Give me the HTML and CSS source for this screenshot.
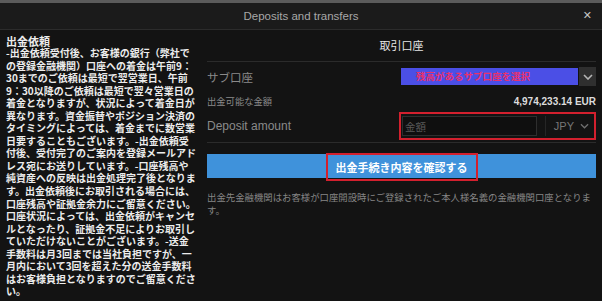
FILE: index.html
```html
<!DOCTYPE html>
<html lang="ja">
<head>
  <meta charset="UTF-8" />
  <meta name="viewport" content="width=device-width, initial-scale=1.0"/>
  <title>Deposits and transfers</title>
  <link rel="stylesheet" href="styles.css">
</head>
<body>

  <div class="topstrip"></div>
  <div class="titlebar">
    <span class="title">Deposits and transfers</span>
    <span class="close">&#x2715;</span>
  </div>

  <div class="content">
    <div class="notice">
      <h3>出金依頼</h3>
      <p>
        -出金依頼受付後、お客様の銀行（弊社で<br>
        の登録金融機関）口座への着金は午前9：<br>
        30までのご依頼は最短で翌営業日、午前<br>
        9：30以降のご依頼は最短で翌々営業日の<br>
        着金となりますが、状況によって着金日が<br>
        異なります。資金振替やポジション決済の<br>
        タイミングによっては、着金までに数営業<br>
        日要することもございます。-出金依頼受<br>
        付後、受付完了のご案内を登録メールアド<br>
        レス宛にお送りしています。-口座残高や<br>
        純資産への反映は出金処理完了後となりま<br>
        す。出金依頼後にお取引される場合には、<br>
        口座残高や証拠金余力にご留意ください。<br>
        口座状況によっては、出金依頼がキャンセ<br>
        ルとなったり、証拠金不足によりお取引し<br>
        ていただけないことがございます。-送金<br>
        手数料は月3回までは当社負担ですが、一<br>
        月内において3回を超えた分の送金手数料<br>
        はお客様負担となりますのでご留意くださ<br>
        い。
      </p>
    </div>

    <div class="form">
      <div class="form-title">取引口座</div>

      <div class="row row-sub">
        <span class="label">サブ口座</span>
        <div class="select-wrap">
          <div class="select-sub">残高があるサブ口座を選択</div>
          <div class="select-arrow">
            <svg width="10" height="6" viewBox="0 0 10 6"><polyline points="1,1 5,5 9,1" fill="none" stroke="#b5b5b5" stroke-width="1.6"/></svg>
          </div>
        </div>
      </div>

      <div class="row row-available">
        <span class="label small">出金可能な金額</span>
        <span class="amount">4,974,233.14 EUR</span>
      </div>

      <div class="row row-deposit">
        <span class="label en">Deposit amount</span>
        <div class="highlight amount-box">
          <input class="amount-input" placeholder="金額" />
          <div class="currency">
            JPY
            <svg width="9" height="6" viewBox="0 0 10 6"><polyline points="1,1 5,5 9,1" fill="none" stroke="#6f6f6f" stroke-width="1.4"/></svg>
          </div>
        </div>
      </div>

      <button class="confirm"><span class="highlight confirm-text">出金手続き内容を確認する</span></button>

      <p class="note">出金先金融機関はお客様が口座開設時にご登録されたご本人様名義の金融機関口座となります。</p>
    </div>
  </div>

</body>
</html>
```

FILE: styles.css
```css
body { margin: 0; background: #131313; font-family: "Noto Sans CJK JP", "Liberation Sans", sans-serif; width: 602px; height: 301px; overflow: hidden; }

.topstrip { height: 3px; background: #5b5b5b; }
.titlebar { height: 26px; background: #1b1b1b; border-bottom: 1px solid #2c2c2c; display: flex; align-items: center; justify-content: center; position: relative; }
.title { font-family: "Liberation Sans", sans-serif; font-size: 11.5px; color: #a8a8a8; }
.close { position: absolute; right: 10px; top: 6px; font-size: 11px; color: #c4c4c4; font-family: "DejaVu Sans", sans-serif; }

.content { display: grid; grid-template-columns: 200px 1fr; }

.notice { padding: 5px 0 0 6px; color: #ececec; }
.notice h3 { margin: 0; font-size: 11px; line-height: 12px; font-weight: 700; }
.notice p { margin: 0; font-size: 10px; line-height: 12.55px; font-weight: 700; white-space: nowrap; }

.form { padding: 0 6px 0 7px; }
.form-title { height: 31px; line-height: 31px; text-align: center; color: #e6e6e6; font-size: 11px; border-bottom: 1px solid #2b2b2b; }

.row { display: flex; align-items: center; justify-content: space-between; }
.label { color: #8a8a8a; font-size: 11.5px; }
.label.small { font-size: 9.3px; }
.label.en { font-family: "Liberation Sans", sans-serif; font-size: 12px; }

.row-sub { height: 29px; }
.select-wrap { display: flex; align-items: center; }
.select-sub { width: 162px; height: 17px; line-height: 17px; padding-left: 15px; background: #4b4fe6; color: #e8316e; font-size: 9.5px; font-weight: 700; }
.select-arrow { width: 17px; height: 19px; margin-left: 1px; background: #2f2f2f; display: flex; align-items: center; justify-content: center; }

.row-available { height: 20px; }
.amount { font-family: "Liberation Sans", sans-serif; font-weight: 700; font-size: 10px; color: #dcdcdc; }

.row-deposit { height: 30px; padding-bottom: 1px; border-bottom: 1px solid #2b2b2b; }
.highlight { border: 2px solid #d3202e; }
.amount-box { width: 192px; height: 24px; display: flex; align-items: center; padding-left: 1px; }
.amount-input { width: 135px; height: 20px; box-sizing: border-box; margin: 0; padding: 0 2px; background: #0f0f0f; border: 1px solid #2e2e2e; color: #ccc; font-family: "Noto Sans CJK JP", sans-serif; font-size: 10.5px; outline: none; }
.amount-input::placeholder { color: #5a5a5a; }
.currency { flex: 1; display: flex; align-items: center; justify-content: flex-end; gap: 6px; padding-right: 5px; color: #777; font-family: "Liberation Sans", sans-serif; font-size: 11px; border-left: 1px solid #262626; height: 20px; margin-left: 8px; }

.confirm { display: flex; justify-content: center; align-items: center; width: 100%; height: 24px; margin-top: 11px; padding: 0; border: none; background: #3f92db; cursor: pointer; }
.confirm-text { display: inline-block; padding: 0 8px; line-height: 24px; color: #fff; font-family: "Noto Sans CJK JP", sans-serif; font-size: 11px; font-weight: 700; margin-top: 2px; }

.note { margin: 13px 0 0; color: #858585; font-size: 9.4px; line-height: 13px; }
```
